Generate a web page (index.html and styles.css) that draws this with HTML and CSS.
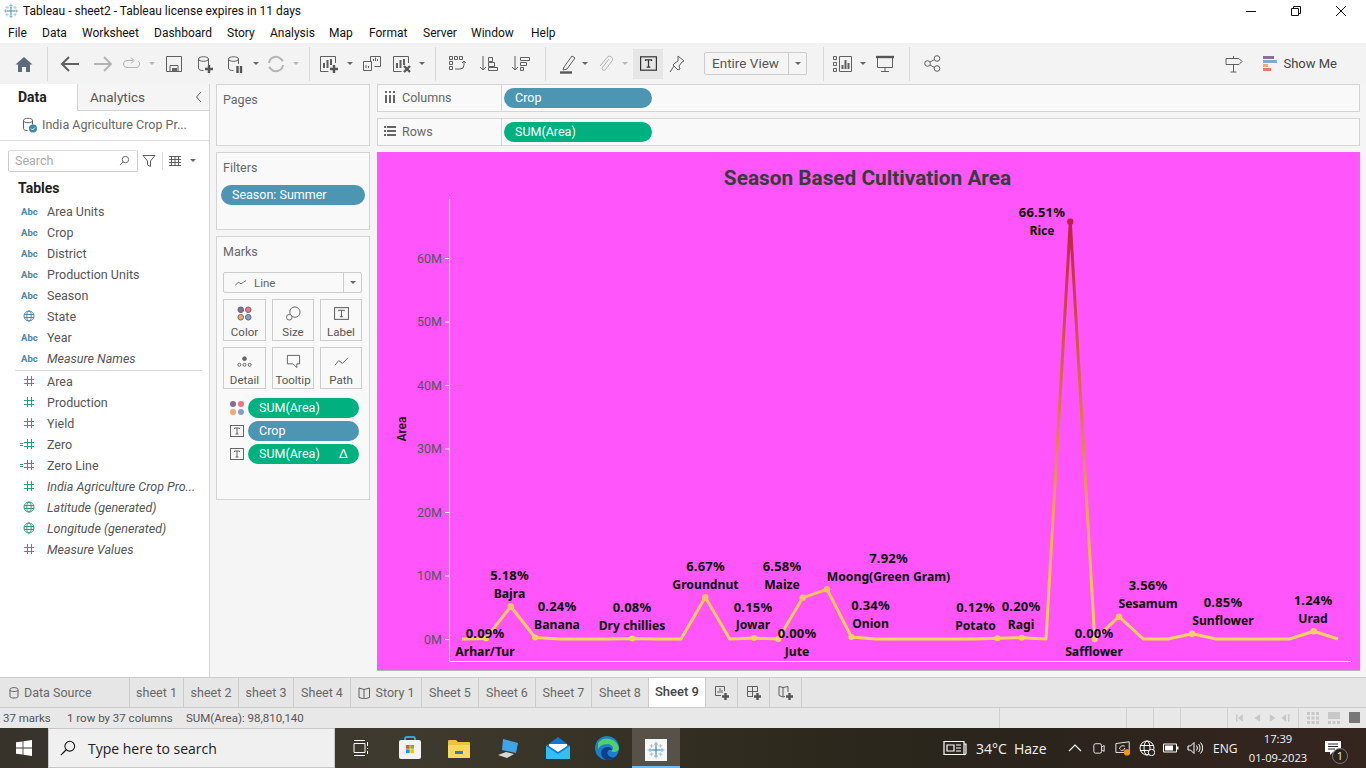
FILE: index.html
```html
<!DOCTYPE html>
<html lang="en">
<head>
<meta charset="utf-8">
<title>Tableau - sheet2</title>
<link rel="stylesheet" href="styles.css">
</head>
<body>
<svg class="sprite" aria-hidden="true">
  <symbol id="hash" viewBox="0 0 12 12"><path d="M4.500 1v10M8.500 1v10M1 4.500h10M1 8.500h10"/></symbol>
  <symbol id="calc" viewBox="0 0 18 12"><path d="M10.500 1v10M14.500 1v10M7 4.500h10M7 8.500h10M3 5.500h3M3 7.500h3"/></symbol>
  <symbol id="globe" viewBox="0 0 12 12"><circle cx="6" cy="6" r="5"/><ellipse cx="6" cy="6" rx="2.200" ry="5"/><path d="M1 4.500h10M1 7.500h10"/></symbol>
  <symbol id="tbox" viewBox="0 0 14 12"><rect x="0.500" y="0.500" width="13" height="11"/><path d="M4.500 4V3h5v1M7 3v6M5.500 9h3"/></symbol>
  <symbol id="dots" viewBox="0 0 16 16"><circle class="d1" cx="4" cy="4" r="3"/><circle class="d2" cx="12" cy="4" r="3"/><circle class="d3" cx="4" cy="12" r="3"/><circle class="d4" cx="12" cy="12" r="3"/></symbol>
  <symbol id="caret" viewBox="0 0 8 4"><path class="fill" d="M0 0h8L4 4z"/></symbol>
  <symbol id="tlogo" viewBox="0 0 24 24">
    <path class="tl-d" d="M12 6v12M6 12h12"/>
    <path class="tl-m" d="M12 1v6M9.500 4h5M12 17v6M9.500 20h5M1 12h6M4 9.500v5M17 12h6M20 9.500v5"/>
    <path class="tl-l" d="M6 4v5M3.500 6.500h5M18 4v5M15.500 6.500h5M6 15v5M3.500 17.500h5M18 15v5M15.500 17.500h5"/>
  </symbol>
</svg>

<header class="titlebar">
  <svg class="applogo"><use href="#tlogo"/></svg>
  <span class="apptitle">Tableau - sheet2 - Tableau license expires in 11 days</span>
  <div class="winctl">
    <svg viewBox="0 0 12 12"><path d="M1 6.500h10"/></svg>
    <svg viewBox="0 0 12 12"><path d="M1.500 3.500h7v7h-7zM3.500 3.500v-2h7v7h-2"/></svg>
    <svg viewBox="0 0 12 12"><path d="M1 1l10 10M11 1L1 11"/></svg>
  </div>
</header>

<nav class="menubar">
  <span class="m36">File</span><span class="m40">Data</span><span class="m72">Worksheet</span><span class="m73">Dashboard</span><span class="m43">Story</span><span class="m59">Analysis</span><span class="m40">Map</span><span class="m54">Format</span><span class="m48">Server</span><span class="m60">Window</span><span>Help</span>
</nav>

<div class="toolbar">
  <div class="tb w47"><svg class="ic20" viewBox="0 0 20 20"><path class="home" d="M1.500 10.500L10 3l8.500 7.500H16V18h-4v-5H8v5H4v-7.500z"/></svg></div>
  <i class="sep"></i>
  <div class="tb w44"><svg class="ic20" viewBox="0 0 20 20"><path class="st2" d="M19 10H2M9 3l-7 7 7 7"/></svg></div>
  <div class="tb w22 dim"><svg class="ic20" viewBox="0 0 20 20"><path class="st2" d="M1 10h17M11 3l7 7-7 7"/></svg></div>
  <div class="tb w32 dim"><svg class="ic20" viewBox="0 0 20 20"><path class="st1" d="M13 6.500H7a3.500 3.500 0 0 0 0 7h9a3.500 3.500 0 0 0 2-6.500M11 3.500l3 3-3 3"/></svg></div>
  <div class="tb w12 dim"><svg class="car"><use href="#caret"/></svg></div>
  <div class="tb w32"><svg class="ic20" viewBox="0 0 20 20"><path class="st1" d="M2.500 2.500h15v15h-15zM6 17.500v-6h8v6"/><path class="fill" d="M8 14h5v3H8z"/></svg></div>
  <div class="tb w30"><svg class="ic20" viewBox="0 0 20 20"><path class="st1" d="M3.500 5c0-3 10-3 10 0v6M3.500 5c0 3 10 3 10 0M3.500 5v9c0 2 2 2.500 5 2.500"/><path class="thick" d="M14 11v8M10 15h8"/></svg></div>
  <div class="tb w30"><svg class="ic20" viewBox="0 0 20 20"><path class="st1" d="M3.500 5c0-3 10-3 10 0v5M3.500 5c0 3 10 3 10 0M3.500 5v9c0 2 2 2.500 5 2.500"/><path class="thick" d="M12.500 12v7M16 12v7"/></svg></div>
  <div class="tb w12"><svg class="car"><use href="#caret"/></svg></div>
  <div class="tb w28 dim"><svg class="ic20" viewBox="0 0 20 20"><path class="st2" d="M3 9a7 7 0 0 1 12-4l2 2M17 11a7 7 0 0 1-12 4l-2-2"/></svg></div>
  <div class="tb w12 dim"><svg class="car"><use href="#caret"/></svg></div>
  <i class="sep ml7"></i>
  <div class="tb w32 ml3"><svg class="ic20" viewBox="0 0 20 20"><path class="st1" d="M16.500 9V2.500h-15v15h8"/><path class="st2" d="M5 14V9M8.500 14V6M12 11V5"/><path class="thick" d="M15 11v8M11 15h8"/></svg></div>
  <div class="tb w10"><svg class="car"><use href="#caret"/></svg></div>
  <div class="tb w34"><svg class="ic20" viewBox="0 0 20 20"><path class="st1" d="M8.500 2.500h10v10h-6M8.500 2.500v5M1.500 7.500h8v9h-8z"/><path class="st1" d="M11.500 7V5M13.500 7V3.500M15.500 7V5M4 14v-3M6.500 14v-2"/></svg></div>
  <div class="tb w26"><svg class="ic20" viewBox="0 0 20 20"><path class="st1" d="M16.500 9V2.500h-15v15h8"/><path class="st2" d="M5 14V9M8.500 14V6M12 11V5"/><path class="thick" d="M12 12l6 6M18 12l-6 6"/></svg></div>
  <div class="tb w14"><svg class="car"><use href="#caret"/></svg></div>
  <i class="sep ml6"></i>
  <div class="tb w42"><svg class="ic20" viewBox="0 0 20 20"><path class="st1" d="M2.500 2.500h3v3h-3zM7.500 2.500h3v3h-3zM12.500 2.500h3v3h-3zM2.500 7.500h3v3h-3zM2.500 12.500h3v3h-3zM8 15h5a4 4 0 0 0 4-4V7M15 9l2-2 2 2"/></svg></div>
  <div class="tb w22"><svg class="ic20" viewBox="0 0 20 20"><path class="st1" d="M4 2v14M1 13l3 3 3-3M9.500 3.500h4v4h-4zM9.500 8.500h6v4h-6zM9.500 13.500h9v3h-9z"/></svg></div>
  <div class="tb w42"><svg class="ic20" viewBox="0 0 20 20"><path class="st1" d="M4 2v14M1 13l3 3 3-3M9.500 3.500h9v3h-9zM9.500 8.500h6v3h-6zM9.500 13.500h3v3h-3z"/></svg></div>
  <i class="sep ml3"></i>
  <div class="tb w30 ml7"><svg class="ic20" viewBox="0 0 20 20"><path class="st1" d="M6 13l8-11 3 2-8 11-4 1z"/><path class="thick" d="M2 18.500h12"/></svg></div>
  <div class="tb w4"><svg class="car"><use href="#caret"/></svg></div>
  <div class="tb w36 dim"><svg class="ic20" viewBox="0 0 20 20"><path class="st1" d="M14 5l-7 9a2 2 0 0 0 3 2l7-9a3 3 0 0 0-5-3.500L5 12"/></svg></div>
  <div class="tb w4 dim"><svg class="car"><use href="#caret"/></svg></div>
  <div class="tb w30 ml6 on"><svg class="tbig"><use href="#tbox"/></svg></div>
  <div class="tb w28"><svg class="ic20" viewBox="0 0 20 20"><path class="st1" d="M11 2l6 5-2 1-3 4 1 3-2 1-5-5 2-2 3-2zM7 12l-4 6"/></svg></div>
  <div class="fit"><span class="fit-t">Entire View</span><span class="fit-c"><svg class="car"><use href="#caret"/></svg></span></div>
  <i class="sep ml16"></i>
  <div class="tb w38"><svg class="ic24" viewBox="0 0 22 20"><path class="st1" d="M1.500 2.500h3v3h-3zM1.500 8.500h3v3h-3zM1.500 14.500h3v3h-3zM7.500 2.500h12v15h-12z"/><path class="st2" d="M10.500 15v-4M13.500 15V6M16.500 15V9"/></svg></div>
  <div class="tb w2"><svg class="car"><use href="#caret"/></svg></div>
  <div class="tb w42"><svg class="ic20" viewBox="0 0 20 20"><path class="st1" d="M2.500 3.500h15v10h-15zM10 13.500v4M6 17.500h8"/><path class="thick" d="M1 3h18"/></svg></div>
  <i class="sep ml3"></i>
  <div class="tb w44"><svg class="ic17" viewBox="0 0 17 17"><circle class="st1" cx="3.500" cy="8.500" r="2.800"/><circle class="st1" cx="13" cy="3.500" r="2.800"/><circle class="st1" cx="13" cy="13.500" r="2.800"/><path class="st1" d="M6 7l4.500-2.500M6 10l4.500 2.500"/></svg></div>
  <div class="tb-right">
    <svg class="ic20" viewBox="0 0 20 20"><path class="st1" d="M2 4.500h13l3 3-3 3H2zM9.500 2v2.500M9.500 10.500V18M6.500 18h6"/></svg>
    <svg class="showme-ic" viewBox="0 0 14 16"><path class="sm1" d="M0 0h11v3H0z"/><path class="sm2" d="M0 4h14v3H0z"/><path class="sm3" d="M0 8h5v3H0z"/><path class="sm4" d="M0 12h8v3H0z"/></svg>
    <span class="showme">Show Me</span>
  </div>
</div>

<main class="work">
  <aside class="side">
    <div class="sidetabs">
      <div class="stab data">Data</div>
      <div class="stab ana">Analytics<svg class="chev" viewBox="0 0 8 12"><path class="st1" d="M6 1L1.500 6 6 11"/></svg></div>
    </div>
    <div class="dsrow">
      <svg class="dsic" viewBox="0 0 16 16"><path class="st1" d="M1.500 3.500c0-3 9-3 9 0v4M1.500 3.500c0 3 9 3 9 0M1.500 3.500v8c0 1.500 2 2 4 2"/><circle class="badge" cx="11" cy="11.500" r="4"/><path class="tick" d="M9 11.500l1.500 1.500 2.500-2.500"/></svg>
      <span>India Agriculture Crop Pr...</span>
    </div>
    <div class="searchrow">
      <div class="search"><span>Search</span><svg class="ic11" viewBox="0 0 12 12"><circle class="st1" cx="7" cy="5" r="3.500"/><path class="st1" d="M4.500 7.500L1 11"/></svg></div>
      <svg class="filt" viewBox="0 0 14 14"><path class="st1" d="M1 1.500h12L8.500 7v5.500l-3-1.500V7z"/></svg>
      <i class="vsep"></i>
      <svg class="gridic" viewBox="0 0 12 10"><path class="st1" d="M0 .5h12M0 3.500h12M0 6.500h12M0 9.500h12M2.500 0v10M6 0v10M9.500 0v10"/></svg>
      <svg class="car"><use href="#caret"/></svg>
    </div>
    <h2 class="tables">Tables</h2>
    <ul class="fields dims">
      <li><b class="abc">Abc</b>Area Units</li>
      <li><b class="abc">Abc</b>Crop</li>
      <li><b class="abc">Abc</b>District</li>
      <li><b class="abc">Abc</b>Production Units</li>
      <li><b class="abc">Abc</b>Season</li>
      <li><svg class="fi blue"><use href="#globe"/></svg>State</li>
      <li><b class="abc">Abc</b>Year</li>
      <li class="it"><b class="abc">Abc</b>Measure Names</li>
    </ul>
    <ul class="fields meas">
      <li><svg class="fi"><use href="#hash"/></svg>Area</li>
      <li><svg class="fi"><use href="#hash"/></svg>Production</li>
      <li><svg class="fi"><use href="#hash"/></svg>Yield</li>
      <li><svg class="fi wide"><use href="#calc"/></svg>Zero</li>
      <li><svg class="fi wide"><use href="#calc"/></svg>Zero Line</li>
      <li class="it"><svg class="fi"><use href="#hash"/></svg>India Agriculture Crop Pro...</li>
      <li class="it"><svg class="fi"><use href="#globe"/></svg>Latitude (generated)</li>
      <li class="it"><svg class="fi"><use href="#globe"/></svg>Longitude (generated)</li>
      <li class="it"><svg class="fi"><use href="#hash"/></svg>Measure Values</li>
    </ul>
  </aside>

  <section class="cards">
    <div class="card pages"><div class="cardh">Pages</div></div>
    <div class="card filters"><div class="cardh">Filters</div><div class="pill blue wide">Season: Summer</div></div>
    <div class="card marks">
      <div class="cardh">Marks</div>
      <div class="marksel"><svg class="lineic" viewBox="0 0 14 8"><path class="st1" d="M0 7l4-4 3 2 6-4"/></svg><span class="ms-t">Line</span><span class="ms-c"><svg class="car"><use href="#caret"/></svg></span></div>
      <div class="mbtns">
        <div class="mbtn"><svg class="mi"><use href="#dots"/></svg>Color</div>
        <div class="mbtn"><svg class="mi" viewBox="0 0 16 16"><circle class="st1" cx="9.500" cy="6.500" r="5.500"/><circle class="st1w" cx="3.500" cy="12" r="3"/></svg>Size</div>
        <div class="mbtn"><svg class="mi"><use href="#tbox"/></svg>Label</div>
        <div class="mbtn"><svg class="mi" viewBox="0 0 16 16"><circle class="fill" cx="8" cy="5" r="2"/><circle class="st1" cx="2.500" cy="11.500" r="1.600"/><circle class="st1" cx="8" cy="11.500" r="1.600"/><circle class="st1" cx="13.500" cy="11.500" r="1.600"/></svg>Detail</div>
        <div class="mbtn"><svg class="mi" viewBox="0 0 16 16"><path class="st1" d="M1.500 1.500h13v9h-3v4l-4-4h-6z"/></svg>Tooltip</div>
        <div class="mbtn"><svg class="mi" viewBox="0 0 16 16"><path class="st1" d="M1 12l4-5 4 3 6-6"/></svg>Path</div>
      </div>
      <div class="mrow"><svg class="mri-d"><use href="#dots"/></svg><div class="pill green">SUM(Area)</div></div>
      <div class="mrow"><svg class="mri"><use href="#tbox"/></svg><div class="pill blue">Crop</div></div>
      <div class="mrow"><svg class="mri"><use href="#tbox"/></svg><div class="pill green">SUM(Area)<span class="delta">Δ</span></div></div>
    </div>
  </section>

  <section class="view">
    <div class="shelf"><div class="shelf-l"><svg class="shic" viewBox="0 0 12 12"><path class="cols" d="M1 4h2v8H1zM5 4h2v8H5zM9 4h2v8H9zM1 0h2v2H1zM5 0h2v2H5zM9 0h2v2H9z"/></svg>Columns</div><div class="shelf-r"><div class="pill blue shelfpill">Crop</div></div></div>
    <div class="shelf"><div class="shelf-l"><svg class="shic" viewBox="0 0 12 12"><path class="cols" d="M3 1h9v2H3zM3 5h9v2H3zM3 9h9v2H3zM0 1h2v2H0zM0 5h2v2H0zM0 9h2v2H0z"/></svg>Rows</div><div class="shelf-r"><div class="pill green shelfpill">SUM(Area)</div></div></div>
    <figure class="chart">
      <svg class="plot" viewBox="377 152 983 518" width="983" height="518">
        <defs>
          <linearGradient id="heat" gradientUnits="userSpaceOnUse" x1="0" y1="639" x2="0" y2="221">
            <stop offset="0" stop-color="#f9d35f"/>
            <stop offset="0.12" stop-color="#f6c25a"/>
            <stop offset="0.6" stop-color="#dc6a48"/>
            <stop offset="1" stop-color="#c01f42"/>
          </linearGradient>
        </defs>
        <text class="ctitle" x="867.500" y="185">Season Based Cultivation Area</text>
        <path class="axis" d="M449.500 199V661.500H1351M445 258.500h4M445 322h4M445 385.500h4M445 449h4M445 512.500h4M445 576h4M445 639.500h4"/>
        <g class="ytick">
          <text x="442" y="263">60M</text><text x="442" y="326">50M</text><text x="442" y="390">40M</text><text x="442" y="453">30M</text><text x="442" y="517">20M</text><text x="442" y="580">10M</text><text x="442" y="644">0M</text>
        </g>
        <text class="ytitle" transform="translate(406 429) rotate(-90)">Area</text>
        <path class="line" d="M462 639L486 638.400L510.700 606.500L535 637.500L559.300 639L583.700 639L608 639L632.300 638.500L656.700 639L681 639L705.300 597.200L729.700 639L754 638L778.300 639L802.700 597.700L827 589.300L851.300 636.900L875.700 639L900 639L924.300 639L948.700 639L973 639L997.300 638.200L1021.700 637.700L1046 639L1070.300 221.700L1094.700 639L1119 616.700L1143.300 639L1167.700 639L1192 633.700L1216.300 639L1240.700 639L1265 639L1289.300 639L1313.700 631.200L1338 639"/>
        <g class="pts">
          <circle cx="486" cy="638.400" r="3"/><circle cx="510.700" cy="606.500" r="3.200"/><circle cx="535" cy="637.500" r="3"/><circle cx="632.300" cy="638.500" r="3"/><circle cx="705.300" cy="597.200" r="3.200"/><circle cx="754" cy="638" r="3"/><circle cx="778.300" cy="639" r="3"/><circle cx="802.700" cy="597.700" r="3.200"/><circle cx="827" cy="589.300" r="3.200"/><circle cx="851.300" cy="636.900" r="3"/><circle cx="997.300" cy="638.200" r="3"/><circle cx="1021.700" cy="637.700" r="3"/><circle cx="1070.300" cy="221.700" r="3.200"/><circle cx="1094.700" cy="639" r="3.200"/><circle cx="1119" cy="616.700" r="3.200"/><circle cx="1192" cy="633.700" r="3.200"/><circle cx="1313.700" cy="631.200" r="3.200"/>
        </g>
        <g class="lbl">
          <text x="485" y="638">0.09%</text><text x="485" y="656">Arhar/Tur</text>
          <text x="509.500" y="580">5.18%</text><text x="509.500" y="598">Bajra</text>
          <text x="557" y="611">0.24%</text><text x="557" y="629">Banana</text>
          <text x="632" y="612">0.08%</text><text x="632" y="630">Dry chillies</text>
          <text x="705.500" y="571">6.67%</text><text x="705.500" y="589">Groundnut</text>
          <text x="753" y="612">0.15%</text><text x="753" y="629">Jowar</text>
          <text x="797" y="638">0.00%</text><text x="797" y="656">Jute</text>
          <text x="782" y="571">6.58%</text><text x="782" y="589">Maize</text>
          <text x="888.500" y="563">7.92%</text><text x="888.500" y="581">Moong(Green Gram)</text>
          <text x="870.500" y="610">0.34%</text><text x="870.500" y="628">Onion</text>
          <text x="975.500" y="612">0.12%</text><text x="975.500" y="630">Potato</text>
          <text x="1021" y="611">0.20%</text><text x="1021" y="629">Ragi</text>
          <text x="1042" y="217">66.51%</text><text x="1042" y="235">Rice</text>
          <text x="1094" y="638">0.00%</text><text x="1094" y="656">Safflower</text>
          <text x="1148" y="590">3.56%</text><text x="1148" y="608">Sesamum</text>
          <text x="1223" y="607">0.85%</text><text x="1223" y="625">Sunflower</text>
          <text x="1313" y="605">1.24%</text><text x="1313" y="623">Urad</text>
        </g>
      </svg>
    </figure>
  </section>
</main>

<div class="tabs">
  <div class="tab t130"><svg class="tabic" viewBox="0 0 10 12"><path class="st1" d="M1 2.500c0-2.500 8-2.500 8 0v7c0 2-8 2-8 0zM1 3c0 2 8 2 8 0"/></svg>Data Source</div>
  <div class="tab t54">sheet 1</div>
  <div class="tab t55">sheet 2</div>
  <div class="tab t55">sheet 3</div>
  <div class="tab t57">Sheet 4</div>
  <div class="tab t71"><svg class="tabic2" viewBox="0 0 13 12"><path class="st1" d="M1 1l5 1.500L11.500 1v9.500L6 12 1 10.500zM6 2.500V12"/></svg>Story 1</div>
  <div class="tab t57">Sheet 5</div>
  <div class="tab t57">Sheet 6</div>
  <div class="tab t56">Sheet 7</div>
  <div class="tab t57">Sheet 8</div>
  <div class="tab t57 active">Sheet 9</div>
  <div class="tab t32"><svg class="addic" viewBox="0 0 16 16"><path class="st1" d="M10.500 6V1.500h-9v9H7"/><path class="st1" d="M4 8V6M6 8V3M8 8V5"/><path class="thick" d="M11.500 8v7M8 11.500h7"/></svg></div>
  <div class="tab t32"><svg class="addic" viewBox="0 0 16 16"><path class="st1" d="M11.500 7V1.500h-10v10H7M1.500 6.500h10M6.500 1.500v10"/><path class="thick" d="M11.500 8v7M8 11.500h7"/></svg></div>
  <div class="tab t32"><svg class="addic" viewBox="0 0 16 16"><path class="st1" d="M1 1.500l4 1 5-1V7M1 1.500v9l4 1.500 2-.5M5 2.500V12"/><path class="thick" d="M11.500 8v7M8 11.500h7"/></svg></div>
</div>

<div class="status">
  <span class="s1">37 marks</span><span class="s2">1 row by 37 columns</span><span class="s3">SUM(Area): 98,810,140</span>
  <i class="sd s-a"></i><i class="sd s-b"></i><i class="sd s-c"></i><i class="sd s-d"></i><i class="sd s-e"></i>
  <svg class="nav" viewBox="0 0 56 10"><path class="navp" d="M0 1h1.500v8H0zM7 1v8L2 5zM25 1v8l-6-4zM35 1l6 4-6 4zM52 1l-5 4 5 4zM54 1h1.500v8H54z"/></svg>
  <i class="sd s-f"></i>
  <svg class="sq" viewBox="0 0 12 12"><path class="navp" d="M0 0h3v3H0zM4.500 0h3v3h-3zM9 0h3v3H9zM0 4.500h3v3H0zM4.500 4.500h3v3h-3zM9 4.500h3v3H9zM0 9h3v3H0zM4.500 9h3v3h-3zM9 9h3v3H9z"/></svg>
  <svg class="sq2" viewBox="0 0 12 12"><path class="navp" d="M0 0h12v7H0zM0 9h3v3H0zM4.500 9h3v3h-3zM9 9h3v3H9z"/></svg>
  <svg class="sq3" viewBox="0 0 12 12"><path class="navd" d="M0 0h12v12H0z"/></svg>
</div>

<footer class="taskbar">
  <div class="start"><svg viewBox="0 0 16 16"><path d="M0 2.300l6.600-.9V7.600H0zM7.400 1.300L16 0v7.600H7.400zM0 8.400h6.600v6.200L0 13.700zM7.400 8.400H16V16l-8.600-1.300z" fill="#fff"/></svg></div>
  <div class="tsearch"><svg viewBox="0 0 18 18"><circle cx="11" cy="7" r="5.500" fill="none" stroke="#111" stroke-width="1.200"/><path d="M7 11l-6 6" stroke="#111" stroke-width="1.400"/></svg><span>Type here to search</span></div>
  <div class="tico"><svg viewBox="0 0 16 16"><path d="M1 3.500h11v9H1zM1 .5h11M1 15.500h11M14.500 2v4M14.500 8v1M14.500 11v3" fill="none" stroke="#fff"/></svg></div>
  <div class="tico"><svg class="big" viewBox="0 0 24 24"><path d="M7 5V3a2 2 0 0 1 2-2h6a2 2 0 0 1 2 2v2" fill="none" stroke="#28a8ea" stroke-width="2"/><rect x="1" y="4" width="22" height="19" rx="2" fill="#f3f3f3"/><path d="M8 9h3.700v3.700H8z" fill="#f25022"/><path d="M12.300 9H16v3.700h-3.700z" fill="#7fba00"/><path d="M8 13.300h3.700V17H8z" fill="#00a4ef"/><path d="M12.300 13.300H16V17h-3.700z" fill="#ffb900"/></svg></div>
  <div class="tico"><svg class="big" viewBox="0 0 24 24"><path d="M1 5a1 1 0 0 1 1-1h7l2 2h11a1 1 0 0 1 1 1v14a1 1 0 0 1-1 1H2a1 1 0 0 1-1-1z" fill="#f0c040"/><path d="M1 9h22v12a1 1 0 0 1-1 1H2a1 1 0 0 1-1-1z" fill="#ffd75e"/><path d="M8 15h8v3H8z" fill="#2d7fc4"/></svg></div>
  <div class="tico"><svg class="big" viewBox="0 0 24 24"><path d="M6 3l15 4-2 10-14-3z" fill="#3ea6e8"/><path d="M1 19l8-3 8 2-7 4z" fill="#d8d8d8"/></svg></div>
  <div class="tico"><svg class="big" viewBox="0 0 24 24"><path d="M0 10L12 1l12 9v13H0z" fill="#0f78d4"/><path d="M0 10l12 8 12-8v13H0z" fill="#35bdf5"/><path d="M3 8h18v2l-9 6-9-6z" fill="#fff"/></svg></div>
  <div class="tico"><svg class="big" viewBox="0 0 24 24"><circle cx="12" cy="12" r="12" fill="#1b7fd0"/><path d="M3 7a12 12 0 0 1 21 5c0 4-6 5-8 3 3-1 3-6-3-7-6 0-9 3-10 5z" fill="#4fd06c"/><path d="M12 24c-6-1-8-9-3-12 3-2 8-1 8 2-3-1-6 1-4 5 2 3 7 3 9 1-2 3-6 4-10 4z" fill="#0c3d87"/></svg></div>
  <div class="tico active"><div class="tabl"><svg><use href="#tlogo"/></svg></div></div>
  <div class="tray">
    <svg class="news" viewBox="0 0 24 16"><path d="M1 1.500h20v13H1zM21 4h2v9a1.500 1.500 0 0 1-2 1.500M4 5h7v6H4zM13 5h5M13 8h5M13 11h5" fill="none" stroke="#fff" stroke-width="1.200"/></svg>
    <span class="temp">34°C</span><span class="haze">Haze</span>
    <svg class="trayi chevup" viewBox="0 0 14 8"><path d="M1 7l6-6 6 6" fill="none" stroke="#fff" stroke-width="1.200"/></svg>
    <svg class="trayi meet" viewBox="0 0 14 16"><path d="M1 5v7a2 2 0 0 0 2 2h5a2 2 0 0 0 2-2V5a2 2 0 0 0-2-2H3a2 2 0 0 0-2 2zM10 7l3-2v7l-3-2" fill="none" stroke="#fff"/></svg>
    <svg class="trayi sync" viewBox="0 0 18 18"><path d="M1 4l15-2v12H1zM5 10a4 4 0 0 1 6-3M11 9a3 3 0 0 1-5 2" fill="none" stroke="#fff"/><circle cx="13.500" cy="14" r="3.500" fill="#ff9800"/></svg>
    <svg class="trayi net" viewBox="0 0 16 16"><circle cx="8" cy="8" r="7" fill="none" stroke="#fff"/><ellipse cx="8" cy="8" rx="3" ry="7" fill="none" stroke="#fff"/><path d="M1 5.500h14M1 10.500h14" stroke="#fff"/><circle cx="12.500" cy="12.500" r="3.200" fill="#2a2420" stroke="#fff"/></svg>
    <svg class="trayi batt" viewBox="0 0 16 10"><path d="M.5 1h13v8H.5z" fill="none" stroke="#fff"/><path d="M2 2.500h8v5H2z" fill="#fff"/><path d="M14 3.500h1.500v3H14z" fill="#fff"/></svg>
    <svg class="trayi vol" viewBox="0 0 16 14"><path d="M1 5h2.500L7 1.500v11L3.500 9H1zM9.500 4.500a4 4 0 0 1 0 5M11.500 3a6 6 0 0 1 0 8M13.500 1.500a8 8 0 0 1 0 11" fill="none" stroke="#fff"/></svg>
    <span class="eng">ENG</span>
    <div class="clock"><span>17:39</span><span>01-09-2023</span></div>
    <div class="notif"><svg viewBox="0 0 16 14"><path d="M0 0h16v11H8l-3 3v-3H0z" fill="#fff"/><path d="M3 3h10M3 5.500h10M3 8h7" stroke="#2a2420"/></svg><span class="nbadge">1</span></div>
  </div>
</footer>
</body>
</html>
```

FILE: styles.css
```css
* { box-sizing: border-box; }
html, body { margin: 0; height: 100%; overflow: hidden; }
body {
  width: 1366px; height: 768px; display: flex; flex-direction: column;
  font: 12.500px Roboto, "Noto Sans", sans-serif; color: #555; background: #fff;
}
ul { list-style: none; margin: 0; padding: 0; }
h2 { margin: 0; }
figure { margin: 0; }
svg { display: block; flex: none; }
.sprite { position: absolute; width: 0; height: 0; overflow: hidden; }

/* shared icon paint */
.st1, .st2, .thick { fill: none; stroke: #5f5f5f; }
.st1 { stroke-width: 1; }
.st1w { fill: #f9f9f9; stroke: #666; }
.st2 { stroke-width: 2; }
.thick { stroke-width: 2.400; stroke: #555; }
.fill { fill: #666; }
.home { fill: #5c6b7b; }
.d1 { fill: #866c96; } .d2 { fill: #f4707f; } .d3 { fill: #f5a772; } .d4 { fill: #7f9fce; }
.tl-d, .tl-m, .tl-l { fill: none; stroke-width: 1; }
.tl-d { stroke: #3f7fa8; stroke-width: 1.400; }
.tl-m { stroke: #5f97b9; }
.tl-l { stroke: #93bad2; }
.ic20 { width: 20px; height: 20px; }
.ic17 { width: 17px; height: 17px; }
.ic24 { width: 22px; height: 20px; }
.car { width: 6px; height: 3px; overflow: visible; }

/* title + menu */
.titlebar { height: 22px; flex: none; display: flex; align-items: center; padding-left: 3px; color: #111; }
.applogo { width: 16px; height: 16px; margin-right: 4px; }
.apptitle { font: 12px Roboto, sans-serif; }
.winctl { margin-left: auto; display: flex; margin-right: 19px; gap: 33px; }
.winctl svg { width: 12px; height: 12px; fill: none; stroke: #111; }
.menubar { height: 21px; flex: none; display: flex; align-items: center; padding-left: 8px; font: 12px Roboto, sans-serif; color: #111; }
.m36 { width: 34px; } .m40 { width: 40px; } .m72 { width: 72px; } .m73 { width: 73px; }
.m43 { width: 43px; } .m59 { width: 59px; } .m54 { width: 54px; } .m48 { width: 48px; } .m60 { width: 60px; }

/* toolbar */
.toolbar { height: 41px; flex: none; display: flex; align-items: center; background: #f3f3f3; }
.tb { display: flex; align-items: center; justify-content: center; height: 30px; flex: none; }
.dim { opacity: .42; }
.on { background: #e6e6e6; }
.sep { width: 1px; height: 34px; background: #d9d9d9; flex: none; }
.w2 { width: 2px; } .w4 { width: 4px; } .w10 { width: 10px; } .w12 { width: 12px; } .w14 { width: 14px; }
.w22 { width: 22px; } .w26 { width: 26px; } .w28 { width: 28px; } .w30 { width: 30px; }
.w32 { width: 32px; } .w34 { width: 34px; } .w36 { width: 36px; } .w38 { width: 38px; } .w42 { width: 42px; }
.w44 { width: 44px; } .w47 { width: 47px; }
.ml3 { margin-left: 3px; } .ml6 { margin-left: 6px; } .ml7 { margin-left: 7px; } .ml16 { margin-left: 16px; }
.tbig { width: 17px; height: 15px; fill: none; stroke: #333; }
.fit { margin-left: 13px; width: 103px; height: 23px; flex: none; display: flex; border: 1px solid #ccc; border-radius: 2px; background: #f5f5f5; font-size: 13.500px; color: #555; }
.fit-t { flex: 1; padding-left: 7px; line-height: 20px; }
.fit-c { width: 18px; border-left: 1px solid #ccc; display: flex; align-items: center; justify-content: center; }
.tb-right { margin-left: auto; display: flex; align-items: center; padding-right: 29px; }
.showme-ic { width: 14px; height: 16px; margin: 0 6px 0 19px; }
.sm1 { fill: #8a7098; } .sm2 { fill: #86a5d0; } .sm3 { fill: #f5a772; } .sm4 { fill: #f4707f; }
.showme { font-size: 13px; color: #444; }

/* main area */
.work { flex: 1; min-height: 0; display: flex; background: #f5f5f5; border-bottom: 1px solid #ccc; }
.side { width: 210px; flex: none; background: #fff; border-right: 1px solid #d4d4d4; }
.sidetabs { display: flex; height: 27px; }
.stab { height: 27px; line-height: 27px; position: relative; }
.data { width: 77px; padding-left: 18px; font-size: 14px; font-weight: 700; color: #222; background: #fff; }
.ana { flex: 1; padding-left: 12px; font-size: 13.500px; background: #f5f5f5; border-left: 1px solid #d4d4d4; border-bottom: 1px solid #d4d4d4; }
.chev { position: absolute; right: 6px; top: 7px; width: 8px; height: 12px; }
.dsrow { height: 30px; display: flex; align-items: center; padding: 0 0 2px 22px; gap: 4px; border-bottom: 1px solid #ddd; color: #666; font-size: 12.500px; }
.dsic { width: 16px; height: 16px; }
.badge { fill: #3d87a8; }
.tick { fill: none; stroke: #fff; stroke-width: 1; }
.searchrow { display: flex; align-items: center; height: 21px; margin-top: 9px; padding-left: 8px; }
.search { width: 130px; height: 22px; border: 1px solid #ccc; border-top-color: #ddd; border-radius: 2px; display: flex; align-items: center; justify-content: space-between; padding: 0 7px 0 6px; color: #aaa; font-size: 12.500px; }
.ic11 { width: 11px; height: 11px; }
.filt { width: 14px; height: 14px; margin-left: 4px; }
.vsep { width: 1px; height: 18px; background: #ddd; margin: 0 6px 0 6px; }
.gridic { width: 12px; height: 10px; margin-right: 9px; }
.tables { font-size: 14px; font-weight: 700; color: #222; padding: 7px 0 0 18px; height: 30px; line-height: 20px; }
.fields { margin-left: 15px; margin-right: 7px; }
.fields li { height: 21px; display: flex; align-items: center; padding-left: 32px; position: relative; color: #555; font-size: 12.500px; white-space: nowrap; }
.dims { border-bottom: 1px solid #ddd; padding-bottom: 1px; }
.it { font-style: italic; }
.abc { position: absolute; left: 6px; top: 5px; font-size: 9.500px; line-height: 12px; font-weight: 700; font-style: normal; color: #4c87a3; }
.fi { position: absolute; left: 8px; top: 4px; width: 12px; height: 12px; fill: none; stroke: #2f9e78; }
.fi.blue { stroke: #4c87a3; }
.fi.wide { left: 2px; width: 18px; }

/* cards */
.cards { width: 167px; flex: none; padding: 0 7px 0 6px; display: flex; flex-direction: column; gap: 6px; }
.card { border: 1px solid #d4d4d4; background: #f9f9f9; }
.cardh { color: #666; font-size: 12.500px; padding: 7px 0 0 6px; }
.pages { height: 62px; }
.filters { height: 78px; }
.marks { height: 264px; }
.pill { height: 20px; border-radius: 10px; color: #fff; font-size: 12.500px; line-height: 20px; padding-left: 11px; }
.pill.blue { background: #4c96b4; }
.pill.green { background: #00b180; }
.filters .cardh { height: 32px; }
.filters .pill { margin: 0 4px; }
.marks .cardh { height: 35px; }
.marksel { margin: 0 7px 6px 6px; height: 21px; border: 1px solid #ccc; border-radius: 2px; display: flex; align-items: center; background: #f9f9f9; font-size: 11.500px; color: #666; }
.lineic { width: 12px; height: 8px; margin: 0 7px 0 11px; }
.ms-t { flex: 1; }
.ms-c { width: 18px; height: 19px; border-left: 1px solid #ccc; display: flex; align-items: center; justify-content: center; }
.mbtns { display: grid; grid-template-columns: 43px 42px 42px; column-gap: 6px; row-gap: 6px; margin: 0 7px 9px 6px; }
.mbtn { height: 42px; border: 1px solid #ccc; display: flex; flex-direction: column; align-items: center; justify-content: flex-end; padding-bottom: 1px; font-size: 11.500px; color: #555; gap: 3px; }
.mi { width: 15px; height: 15px; fill: none; stroke: #666; margin-bottom: 1px; }
.mrow { display: flex; align-items: center; gap: 3px; height: 20px; margin: 0 10px 3px 12px; }
.mri { width: 16px; height: 12px; fill: none; stroke: #666; }
.mri-d { width: 16px; height: 16px; }
.mrow .pill { flex: 1; display: flex; justify-content: space-between; padding-right: 11px; }
.delta { font-size: 13px; }

/* view */
.view { flex: 1; min-width: 0; padding-right: 6px; display: flex; flex-direction: column; }
.shelf { height: 28px; margin-bottom: 6px; display: flex; border: 1px solid #d4d4d4; background: #f9f9f9; flex: none; }
.shelf-l { width: 124px; border-right: 1px solid #d4d4d4; display: flex; align-items: center; padding: 0 0 2px 6px; color: #666; font-size: 12.500px; }
.shic { width: 12px; height: 12px; margin-right: 6px; }
.cols { fill: #666; }
.shelf-r { flex: 1; padding: 3px 0 0 2px; }
.shelfpill { width: 148px; }
.chart { height: 519px; background: #ff55fa; flex: none; border-bottom: 1px solid #b5b5b5; }
.plot { display: block; }
.ctitle { text-anchor: middle; font: 700 20.800px Roboto, "Noto Sans", sans-serif; fill: #3a3a3a; }
.axis { fill: none; stroke: #fff; stroke-width: 1; }
.ytick text { text-anchor: end; font-size: 12.500px; fill: #555; }
.ytitle { text-anchor: middle; font: 500 12px Roboto, sans-serif; fill: #111; }
.line { fill: none; stroke: url(#heat); stroke-width: 3; stroke-linejoin: round; }
.pts circle { fill: url(#heat); }
.lbl text { text-anchor: middle; font: 700 12.200px "Noto Sans", sans-serif; fill: #0a0a0a; }
.lbl text:nth-child(odd) { font-size: 13px; letter-spacing: .2px; }

/* tabs + status */
.tabs { height: 30px; flex: none; display: flex; background: #e6e6e6; border-bottom: 1px solid #ccc; }
.tab { height: 29px; display: flex; align-items: center; justify-content: center; border-right: 1px solid #ccc; color: #666; font-size: 12.500px; flex: none; gap: 5px; }
.t130 { width: 130px; justify-content: flex-start; padding-left: 9px; }
.t54 { width: 54px; } .t55 { width: 55px; } .t56 { width: 56px; } .t57 { width: 57px; } .t71 { width: 71px; } .t32 { width: 32px; }
.tabic { width: 10px; height: 12px; }
.tabic2 { width: 13px; height: 12px; }
.addic { width: 16px; height: 16px; }
.active { background: #fff; color: #444; font-weight: 500; font-size: 13px; align-items: flex-start; padding-top: 6px; }
.status { height: 20px; flex: none; background: #e8e8e8; position: relative; display: flex; align-items: center; padding-left: 3px; color: #555; font-size: 11.500px; }
.s1 { width: 64px; } .s2 { width: 119px; }
.sd { position: absolute; top: 0; width: 1px; height: 20px; background: #d0d0d0; }
.s-a { left: 999px; } .s-b { left: 1126px; } .s-c { left: 1153px; } .s-d { left: 1180px; } .s-e { left: 1227px; } .s-f { left: 1298px; }
.nav { position: absolute; left: 1236px; top: 5px; width: 54px; height: 10px; }
.navp { fill: #c8c8c8; }
.navd { fill: #777; }
.sq { position: absolute; left: 1307px; top: 4px; width: 12px; height: 12px; }
.sq2 { position: absolute; left: 1328px; top: 4px; width: 12px; height: 12px; }
.sq3 { position: absolute; left: 1349px; top: 4px; width: 11px; height: 11px; }

/* taskbar */
.taskbar { height: 40px; flex: none; display: flex; align-items: stretch; color: #fff; background: linear-gradient(90deg, #37322a 0%, #3f3a2e 30%, #2c281c 60%, #2a241c 75%, #35251f 100%); }
.start { width: 48px; display: flex; align-items: center; justify-content: center; }
.start svg { width: 16px; height: 16px; }
.tsearch { width: 287px; margin-right: 1px; background: #f0f0f0; border: 1px solid #c8c8c8; display: flex; align-items: center; padding-left: 11px; gap: 12px; color: #222; font: 14px "Open Sans", sans-serif; }
.tsearch svg { width: 16px; height: 16px; }
.tico { width: 49.330px; display: flex; align-items: center; justify-content: center; }
.tico svg { width: 16px; height: 16px; }
.tico svg.big { width: 24px; height: 24px; }
.tico.active { width: 48px; background: #56524a; border-bottom: 2px solid #76b9ed; }
.tabl { width: 22px; height: 22px; background: #f5f7f9; padding: 2px; }
.tabl svg { width: 18px; height: 18px; }
.tray { margin-left: auto; display: flex; align-items: center; font: 14px "Open Sans", sans-serif; color: #f2f2f2; }
.news { width: 24px; height: 16px; margin-right: 9px; }
.temp { width: 38px; }
.haze { width: 54px; }
.trayi { width: 16px; height: 16px; margin-right: 8px; }
.chevup { width: 14px; height: 8px; margin-right: 11px; }
.meet { width: 12px; margin-right: 10px; }
.batt { height: 10px; }
.vol { height: 14px; margin-right: 10px; }
.eng { font-size: 12px; width: 36px; }
.clock { width: 58px; display: flex; flex-direction: column; align-items: center; font-size: 11.200px; line-height: 19px; white-space: nowrap; }
.notif { position: relative; width: 59px; padding-left: 18px; }
.notif svg { width: 16px; height: 14px; }
.nbadge { position: absolute; left: 25px; top: 7px; width: 16px; height: 16px; line-height: 13px; border-radius: 50%; border: 1.500px solid #777; background: #2a2420; font-size: 11px; text-align: center; }
```
